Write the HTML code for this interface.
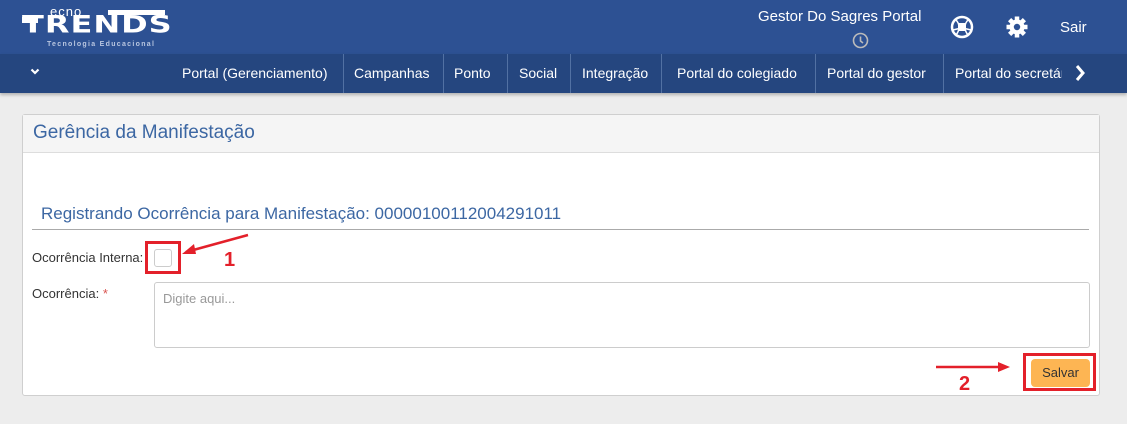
<!DOCTYPE html>
<html><head><meta charset="utf-8"><style>
*{margin:0;padding:0;box-sizing:border-box}
body{width:1127px;height:424px;background:#ededed;font-family:"Liberation Sans",sans-serif;position:relative;overflow:hidden}
.hdr{position:absolute;left:0;top:0;width:1127px;height:54px;background:#2d5193}
.nav{position:absolute;left:0;top:54px;width:1127px;height:39px;background:#25467f;box-shadow:0 2px 3px rgba(0,0,0,.25)}
.nav span{position:absolute;top:11px;color:#fff;font-size:14px;white-space:nowrap}
.sep{position:absolute;top:0;width:1px;height:39px;background:#5271a3}
.panel{position:absolute;left:22px;top:114px;width:1078px;height:282px;background:#fff;border:1px solid #cfcfcf;border-radius:3px}
.ph{height:38px;background:#f5f5f5;border-bottom:1px solid #ddd;color:#3c67a3;font-size:19px;padding:7px 10px}
.t{position:absolute;font-size:13px;color:#333}
.red{position:absolute;border:3px solid #e3202a}
</style></head><body>
<div class="hdr">
 <div style="position:absolute;left:22px;top:9px;width:155px;height:40px;">
  <div style="position:absolute;left:86px;top:1px;width:57px;height:5px;background:#fff"></div>
  <div style="position:absolute;left:0;top:8px;width:16px;height:6px;background:#fff"></div>
  <div style="position:absolute;left:28px;top:-5px;color:#fff;font-size:13px;letter-spacing:1px">ecno</div>
  <div style="position:absolute;left:0;top:3px;color:#fff;font-size:32px;font-weight:bold;letter-spacing:1px;transform:scaleY(.75);transform-origin:left top;line-height:32px;font-family:'DejaVu Sans',sans-serif">TRENDS</div>
  <div style="position:absolute;left:25px;top:32px;color:#b9c6e0;font-size:7px;letter-spacing:1.3px;font-weight:bold">Tecnologia Educacional</div>
 </div>
 <div style="position:absolute;left:758px;top:8px;color:#fff;font-size:15px">Gestor Do Sagres Portal</div>
 <svg style="position:absolute;left:852px;top:32px" width="17" height="17" viewBox="0 0 17 17"><circle cx="8.5" cy="8.5" r="7" fill="none" stroke="#bbb" stroke-width="1.6"/><path d="M8.5 4.5V9l2.5 2" fill="none" stroke="#bbb" stroke-width="1.6"/></svg>
 <svg style="position:absolute;left:950px;top:15px" width="24" height="24" viewBox="0 0 24 24"><circle cx="12" cy="12" r="10" fill="none" stroke="#fff" stroke-width="2.5"/><rect x="8" y="8" width="8" height="8" fill="#fff"/><path d="M3 15c6-2 12-2 18 0M6 5c4 4 4 10 0 15M18 5c-4 4-4 10 0 15" stroke="#fff" stroke-width="1.5" fill="none"/></svg>
 <svg style="position:absolute;left:1005px;top:15px" width="24" height="24" viewBox="0 0 24 24"><circle cx="12" cy="12" r="7.5" fill="#fff"/><g stroke="#fff" stroke-width="4.5"><path d="M12 1.5v5M12 17.5v5M1.5 12h5M17.5 12h5M4.6 4.6l3.5 3.5M15.9 15.9l3.5 3.5M4.6 19.4l3.5-3.5M15.9 8.1l3.5-3.5"/></g><circle cx="12" cy="12" r="3.2" fill="#2d5193"/></svg>
 <div style="position:absolute;left:1060px;top:19px;color:#fff;font-size:15px">Sair</div>
</div>
<div class="nav">
 <svg style="position:absolute;left:30px;top:14px" width="10" height="8" viewBox="0 0 10 8"><path d="M1.5 1.5L5 5l3.5-3.5" stroke="#fff" stroke-width="2.2" fill="none"/></svg>
 <span style="left:182px">Portal (Gerenciamento)</span><div class="sep" style="left:343px"></div>
 <span style="left:354px">Campanhas</span><div class="sep" style="left:443px"></div>
 <span style="left:454px">Ponto</span><div class="sep" style="left:507px"></div>
 <span style="left:519px">Social</span><div class="sep" style="left:570px"></div>
 <span style="left:582px">Integração</span><div class="sep" style="left:661px"></div>
 <span style="left:677px">Portal do colegiado</span><div class="sep" style="left:815px"></div>
 <span style="left:827px">Portal do gestor</span><div class="sep" style="left:943px"></div>
 <span style="left:955px;width:107px;overflow:hidden">Portal do secretário</span>
 <svg style="position:absolute;left:1074px;top:10px" width="12" height="18" viewBox="0 0 12 18"><path d="M3 2l6 7-6 7" stroke="#fff" stroke-width="3" fill="none"/></svg>
</div>
<div class="panel"><div class="ph">Gerência da Manifestação</div></div>
<div style="position:absolute;left:41px;top:204px;color:#3c67a3;font-size:17px">Registrando Ocorrência para Manifestação: 00000100112004291011</div>
<div style="position:absolute;left:32px;top:229px;width:1057px;height:1px;background:#aaa"></div>
<div class="t" style="left:32px;top:250px">Ocorrência Interna:</div>
<div style="position:absolute;left:154px;top:249px;width:18px;height:18px;border:1px solid #ccc;border-radius:3px"></div>
<div class="red" style="left:145px;top:241px;width:36px;height:33px"></div>
<svg style="position:absolute;left:178px;top:232px" width="75" height="45" viewBox="0 0 75 45"><path d="M70 3L8 20" stroke="#e3202a" stroke-width="2.5"/><path d="M4 22l12-10 2 10z" fill="#e3202a"/><text x="46" y="34" font-family="Liberation Sans" font-weight="bold" font-size="20" fill="#e3202a">1</text></svg>
<div class="t" style="left:32px;top:286px">Ocorrência: <span style="color:#d9534f">*</span></div>
<div style="position:absolute;left:154px;top:282px;width:936px;height:66px;border:1px solid #ccc;border-radius:3px;padding:8px;font-size:13px;color:#999">Digite aqui...</div>
<svg style="position:absolute;left:934px;top:358px" width="80" height="40" viewBox="0 0 80 40"><path d="M2 9H70" stroke="#e3202a" stroke-width="2.5"/><path d="M76 9l-12-5v10z" fill="#e3202a"/><text x="25" y="32" font-family="Liberation Sans" font-weight="bold" font-size="20" fill="#e3202a">2</text></svg>
<div class="red" style="left:1023px;top:353px;width:73px;height:38px"></div>
<div style="position:absolute;left:1031px;top:359px;width:59px;height:28px;background:#fdb553;border-radius:4px;color:#333;font-size:13px;text-align:center;line-height:28px">Salvar</div>
</body></html>
